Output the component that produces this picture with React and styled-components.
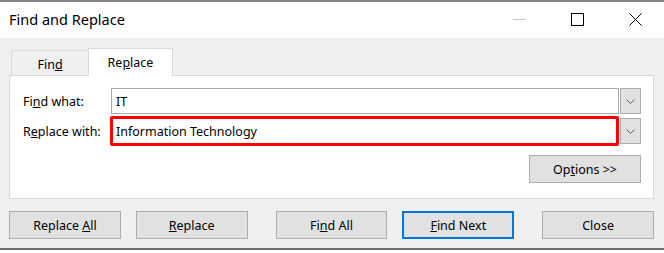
import styled, { createGlobalStyle } from 'styled-components';

const GlobalStyle = createGlobalStyle`
  body {
    margin: 0;
    background: #fff;
    font-family: 'Noto Sans', 'Open Sans', sans-serif;
  }
`;

const App = () => {
  return (
    <>
      <GlobalStyle />
      <Window>
        <TitleBar>
          <Title>Find and Replace</Title>
          <Controls>
            <CtrlBtn>
              <svg width="13" height="13" viewBox="0 0 13 13">
                <line x1="0" y1="6.5" x2="13" y2="6.5" stroke="#c4c4c4" strokeWidth="1" />
              </svg>
            </CtrlBtn>
            <CtrlBtn>
              <svg width="13" height="13" viewBox="0 0 13 13">
                <rect x="0.5" y="0.5" width="12" height="12" fill="none" stroke="#000" strokeWidth="1" />
              </svg>
            </CtrlBtn>
            <CtrlBtn>
              <svg width="13" height="13" viewBox="0 0 13 13">
                <path d="M0.5 0.5 L12.5 12.5 M12.5 0.5 L0.5 12.5" stroke="#000" strokeWidth="1" />
              </svg>
            </CtrlBtn>
          </Controls>
        </TitleBar>
        <Body>
          <TabBar>
            <Tab>
              <span>
                Fin<u>d</u>
              </span>
            </Tab>
            <Tab active>
              <span>
                Re<u>p</u>lace
              </span>
            </Tab>
          </TabBar>
          <Panel>
            <Row>
              <Label>
                Fi<u>n</u>d what:
              </Label>
              <Combo>
                <Field>IT</Field>
                <Drop>
                  <Chevron />
                </Drop>
              </Combo>
            </Row>
            <Row>
              <Label>
                R<u>e</u>place with:
              </Label>
              <Combo>
                <Field highlight>Information Technology</Field>
                <Drop>
                  <Chevron />
                </Drop>
              </Combo>
            </Row>
            <OptionsRow>
              <Button>
                <span>
                  Op<u>t</u>ions &gt;&gt;
                </span>
              </Button>
            </OptionsRow>
          </Panel>
          <ButtonRow>
            <Button>
              <span>
                Replace <u>A</u>ll
              </span>
            </Button>
            <Button gap={15}>
              <span>
                <u>R</u>eplace
              </span>
            </Button>
            <Button gap={28}>
              <span>
                Fi<u>n</u>d All
              </span>
            </Button>
            <Button gap={15} primary>
              <span>
                <u>F</u>ind Next
              </span>
            </Button>
            <Button gap={28}>
              <span>Close</span>
            </Button>
          </ButtonRow>
        </Body>
      </Window>
    </>
  );
};

const Chevron = () => (
  <svg width="9" height="5" viewBox="0 0 9 5">
    <path d="M0.5 0.5 L4.5 4.5 L8.5 0.5" fill="none" stroke="#606060" strokeWidth="1" />
  </svg>
);

const Window = styled.div`
  width: 664px;
  border-top: 2px solid #858585;
`;

const TitleBar = styled.div`
  height: 36px;
  background: #fff;
  display: flex;
  align-items: center;
`;

const Title = styled.div`
  padding-left: 9px;
  font-size: 14.5px;
  color: #000;
  margin-top: -2px;
`;

const Controls = styled.div`
  margin-left: auto;
  display: flex;
  height: 100%;
`;

const CtrlBtn = styled.div`
  width: 58px;
  display: flex;
  align-items: center;
  justify-content: center;
  margin-top: -2px;
`;

const Body = styled.div`
  background: #f0f0f0;
  padding: 10px 10px 9px 9px;
  border-bottom: 2px solid #6d6d6d;
`;

const TabBar = styled.div`
  display: flex;
  align-items: flex-end;
  padding-left: 2px;
  height: 27px;
`;

const Tab = styled.div`
  position: relative;
  z-index: ${(p) => (p.active ? 1 : 0)};
  box-sizing: border-box;
  width: ${(p) => (p.active ? '85px' : '78px')};
  height: ${(p) => (p.active ? '28px' : '25px')};
  margin-bottom: ${(p) => (p.active ? '-1px' : '0')};
  margin-left: ${(p) => (p.active ? '-1px' : '0')};
  background: ${(p) => (p.active ? '#fff' : '#f0f0f0')};
  border: 1px solid #d9d9d9;
  border-bottom: none;
  display: flex;
  align-items: center;
  justify-content: center;
  font-size: 12.5px;
  color: #000;
  padding-top: ${(p) => (p.active ? '0' : '2px')};
`;

const Panel = styled.div`
  background: #fff;
  border: 1px solid #d9d9d9;
  padding: 12px 12px 0 13px;
  box-sizing: border-box;
  height: 124px;
`;

const Row = styled.div`
  display: flex;
  align-items: center;
  margin-bottom: 2px;
`;

const Label = styled.div`
  width: 90px;
  font-size: 12.5px;
  color: #000;
`;

const Combo = styled.div`
  display: flex;
  align-items: center;
`;

const Field = styled.div`
  box-sizing: border-box;
  width: ${(p) => (p.highlight ? '509px' : '508px')};
  height: ${(p) => (p.highlight ? '30px' : '26px')};
  margin-left: ${(p) => (p.highlight ? '-1px' : '0')};
  border: ${(p) => (p.highlight ? '3px solid #ff0000' : '1px solid #ababab')};
  border-radius: ${(p) => (p.highlight ? '2px' : '0')};
  padding-left: ${(p) => (p.highlight ? '3px' : '4px')};
  display: flex;
  align-items: center;
  font-size: 12.5px;
  color: #000;
  background: #fff;
`;

const Drop = styled.div`
  box-sizing: border-box;
  width: 21px;
  height: 26px;
  margin-left: 1px;
  border: 1px solid #adadad;
  background: #e1e1e1;
  display: flex;
  align-items: center;
  justify-content: center;
`;

const OptionsRow = styled.div`
  display: flex;
  justify-content: flex-end;
  margin-top: 9px;
`;

const ButtonRow = styled.div`
  display: flex;
  margin-top: 12px;
`;

const Button = styled.div`
  box-sizing: border-box;
  width: 112px;
  height: 28px;
  margin-left: ${(p) => p.gap || 0}px;
  background: #e1e1e1;
  border: ${(p) => (p.primary ? '2px solid #0078d7' : '1px solid #adadad')};
  display: flex;
  align-items: center;
  justify-content: center;
  font-size: 12.5px;
  color: #000;
`;

export default App;
